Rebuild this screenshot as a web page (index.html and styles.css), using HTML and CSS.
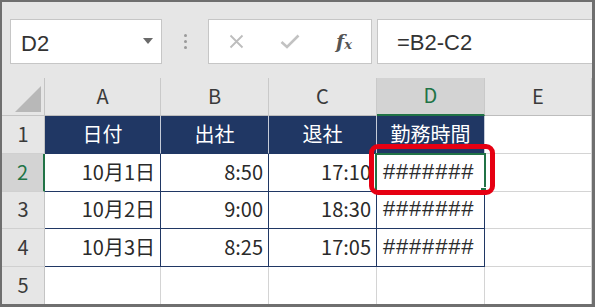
FILE: index.html
```html
<!DOCTYPE html>
<html lang="ja">
<head>
<meta charset="utf-8">
<link rel="stylesheet" href="styles.css">
</head>
<body>
<div class="frame">
  <div class="toolbar">
    <div class="namebox">
      <span class="name">D2</span>
      <svg class="caret" width="10" height="6" viewBox="0 0 10 6"><path d="M0 0H10L5 6Z" fill="#6a6a6a"/></svg>
    </div>
    <div class="dots"><i></i><i></i><i></i></div>
    <div class="fxbox">
      <span class="slot">
        <svg width="15" height="15" viewBox="0 0 15 15"><path d="M1.5 1.5L13.5 13.5M13.5 1.5L1.5 13.5" stroke="#bdbdbd" stroke-width="1.8" fill="none"/></svg>
      </span>
      <span class="slot">
        <svg width="20" height="15" viewBox="0 0 20 15"><path d="M1.5 8L7 13L18.5 1.5" stroke="#c2c2c2" stroke-width="2.6" fill="none"/></svg>
      </span>
      <span class="slot fx">f<span class="x">x</span></span>
    </div>
    <div class="formula">=B2-C2</div>
  </div>
  <div class="sheet">
    <div class="corner"><svg width="26" height="26" viewBox="0 0 26 26"><path d="M26 0V26H0Z" fill="#b8b8b8"/></svg></div>
    <div class="colhead">A</div>
    <div class="colhead">B</div>
    <div class="colhead">C</div>
    <div class="colhead sel">D</div>
    <div class="colhead">E</div>

    <div class="rowhead">1</div>
    <div class="th">日付</div>
    <div class="th">出社</div>
    <div class="th">退社</div>
    <div class="th">勤務時間</div>
    <div class="cell"></div>

    <div class="rowhead sel">2</div>
    <div class="td">10月1日</div>
    <div class="td">8:50</div>
    <div class="td">17:10</div>
    <div class="td hash active">#######
      <span class="selbox"><span class="handle"></span></span>
      <span class="mark"></span>
    </div>
    <div class="cell"></div>

    <div class="rowhead">3</div>
    <div class="td">10月2日</div>
    <div class="td">9:00</div>
    <div class="td">18:30</div>
    <div class="td hash">#######</div>
    <div class="cell"></div>

    <div class="rowhead">4</div>
    <div class="td">10月3日</div>
    <div class="td">8:25</div>
    <div class="td">17:05</div>
    <div class="td hash">#######</div>
    <div class="cell"></div>

    <div class="rowhead">5</div>
    <div class="cell"></div>
    <div class="cell"></div>
    <div class="cell"></div>
    <div class="cell"></div>
    <div class="cell"></div>
  </div>
</div>
</body>
</html>
```
FILE: styles.css
```css
* { box-sizing: border-box; margin: 0; padding: 0; }
html, body { width: 595px; height: 307px; overflow: hidden; background: #fff; }
.frame {
  width: 595px; height: 307px;
  border: 2px solid #6f6f6f; border-right-width: 3px; border-bottom-width: 3px;
  overflow: hidden; position: relative; background: #fff;
  font-family: "Noto Sans CJK JP", sans-serif;
}
.toolbar {
  height: 76px; background: #e6e6e6;
  display: flex; align-items: flex-start;
  padding: 17px 0 0 8px;
}
.namebox {
  width: 152px; height: 45px; flex: none;
  background: #fff; border: 1px solid #c6c6c6;
  display: flex; align-items: center; justify-content: space-between;
  padding: 0 8px 0 10px;
}
.name { font-family: "Liberation Sans", sans-serif; font-size: 22px; color: #333; line-height: 1; padding-top: 4px; }
.caret { margin-top: -1px; }
.dots { width: 46px; height: 45px; flex: none; display: flex; flex-direction: column; align-items: center; justify-content: center; gap: 3px; }
.dots i { display: block; width: 3px; height: 3px; border-radius: 50%; background: #9a9a9a; }
.fxbox {
  width: 164px; height: 45px; flex: none;
  background: #fff; border: 1px solid #c6c6c6;
  display: flex; align-items: center;
}
.slot { width: 55px; display: flex; justify-content: center; align-items: center; }
.fx { font-family: "DejaVu Serif", serif; font-style: italic; font-weight: bold; font-size: 19px; color: #555; line-height: 1; }
.fx .x { font-size: 13px; position: relative; top: 3px; }
.formula {
  flex: none; width: 240px; height: 45px; margin-left: 5px;
  background: #fff; border: 1px solid #c6c6c6;
  font-family: "Liberation Sans", sans-serif; font-size: 22px; color: #333;
  display: flex; align-items: center; padding: 2px 0 0 19px;
}
.sheet {
  display: grid;
  grid-template-columns: 43px 116px 108px 108px 108px 1fr;
  grid-template-rows: 38px 38px 38px 37px 38px 38px;
  font-size: 20px; line-height: 1;
}
.sheet > div { display: flex; align-items: center; }
.corner { background: #e6e6e6; border-right: 1px solid #c4c4c4; border-bottom: 1px solid #c4c4c4; justify-content: flex-end; align-items: flex-end !important; padding: 0 3px 3px 0; }
.colhead { background: #e6e6e6; border-right: 1px solid #c9c9c9; border-bottom: 1px solid #bdbdbd; justify-content: center; color: #3a3a3a; padding-bottom: 2px; }
.colhead.sel { background: #d3d3d3; color: #217346; border-bottom: 2px solid #217346; }
.rowhead { background: #e6e6e6; border-right: 1px solid #c4c4c4; border-bottom: 1px solid #d0d0d0; justify-content: center; color: #3a3a3a; padding-bottom: 2px; }
.rowhead.sel { background: #d3d3d3; color: #217346; border-right: 2px solid #217346; }
.th { background: #203764; color: #fff; justify-content: center; border-right: 1px solid #c5cbd8; border-bottom: 1px solid #203764; padding-bottom: 2px; }
.td { background: #fff; color: #2a2a2a; justify-content: flex-end; padding: 0 5px 2px 0; border-right: 1px solid #203764; border-bottom: 1px solid #203764; }
.td.hash { justify-content: flex-start; padding-left: 6px; font-family: "Liberation Sans", sans-serif; font-size: 22px; letter-spacing: 0.8px; }
.cell { border-right: 1px solid #d4d4d4; border-bottom: 1px solid #d4d4d4; }
.active { position: relative; }
.selbox { position: absolute; left: -2px; top: -1px; right: -2px; bottom: -2px; border: 2px solid #217346; }
.handle { position: absolute; right: -3px; bottom: -3px; width: 7px; height: 7px; background: #217346; border: 1px solid #fff; }
.mark { position: absolute; left: -8px; top: -10px; width: 126px; height: 51px; border: 5px solid #e60012; border-radius: 9px; z-index: 2; }
```
